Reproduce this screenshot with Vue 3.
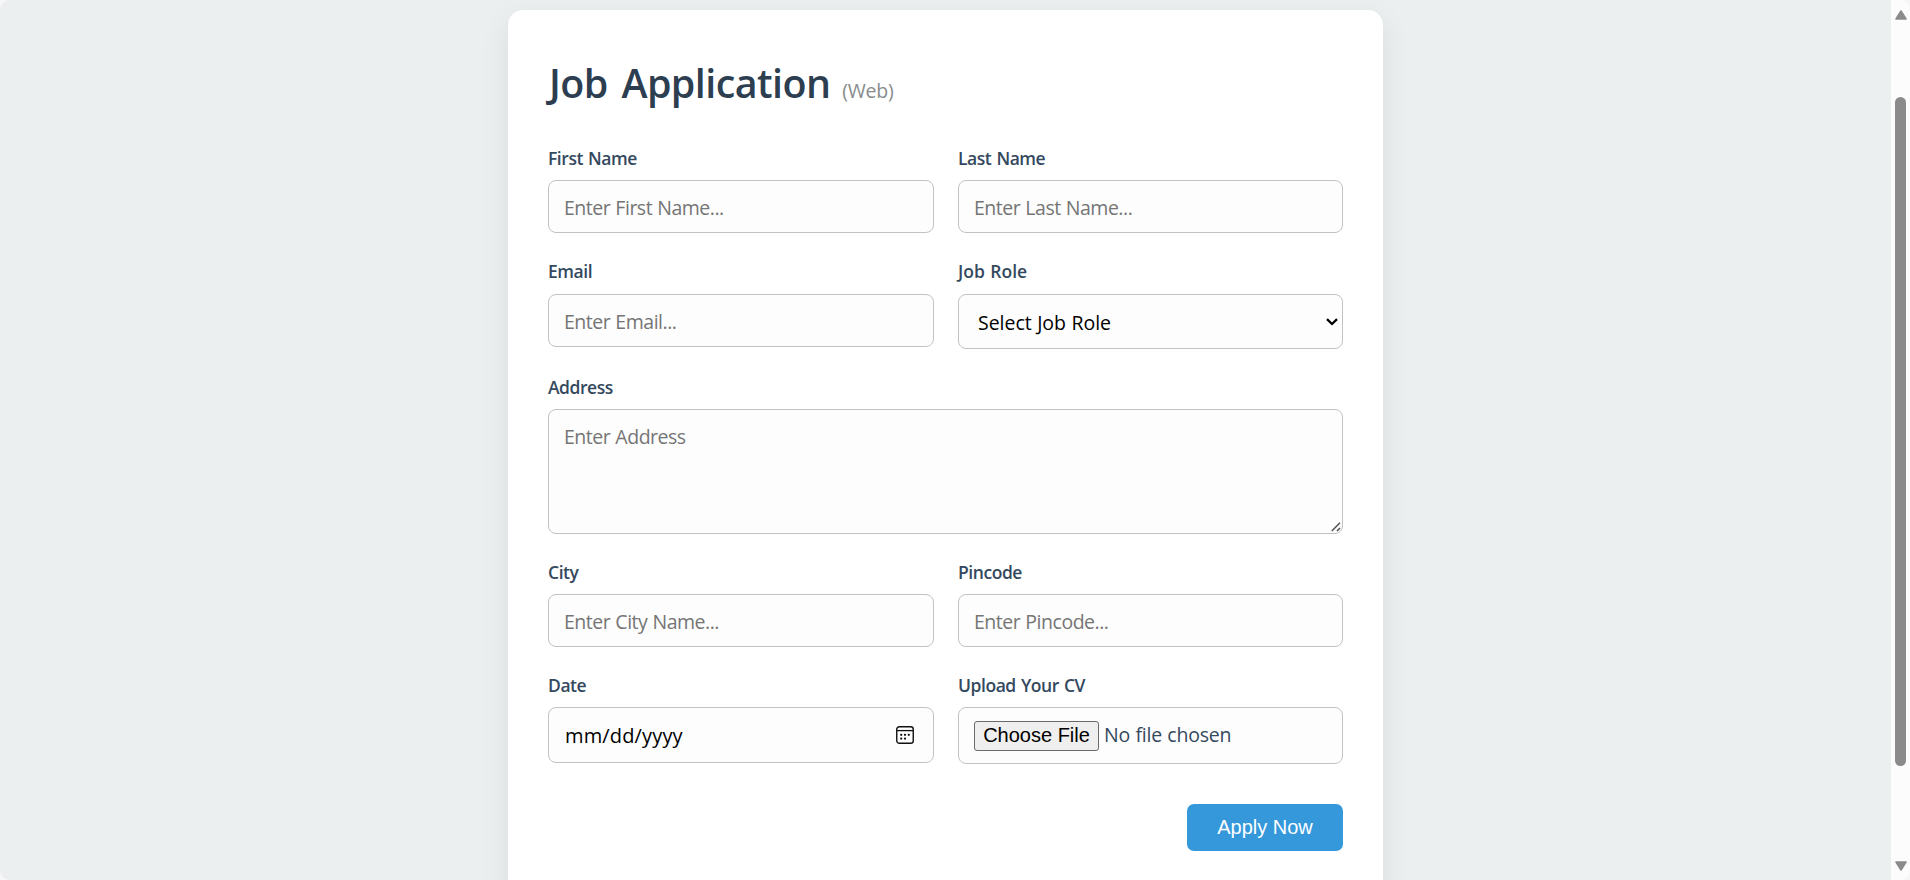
<script setup>
</script>

<template>
  <div class="page">
    <main class="scroll-area">
      <form class="card" @submit.prevent>
        <h1 class="title">Job Application <span class="sub">(Web)</span></h1>

        <div class="row">
          <label class="field"><span class="label">First Name</span>
            <input class="control" type="text" placeholder="Enter First Name..." /></label>
          <label class="field"><span class="label">Last Name</span>
            <input class="control" type="text" placeholder="Enter Last Name..." /></label>
        </div>

        <div class="row contact">
          <label class="field"><span class="label">Email</span>
            <input class="control" type="email" placeholder="Enter Email..." /></label>
          <div class="field"><span class="label role">Job Role</span>
            <div class="control select">
              <span>Select Job Role</span>
              <svg width="14" height="10" viewBox="0 0 14 10"><path d="M2 2.2 7 7 12 2.2" fill="none" stroke="#000" stroke-width="2.3" /></svg>
            </div>
          </div>
        </div>

        <label class="field wide"><span class="label">Address</span>
          <span class="area-wrap">
            <textarea class="control area" placeholder="Enter Address"></textarea>
            <svg class="grip" width="10" height="10" viewBox="0 0 10 10"><path d="M.8 9 9 .8M6 9 9 6" fill="none" stroke="#555" stroke-width="1.6" /></svg>
          </span>
        </label>

        <div class="row">
          <label class="field"><span class="label">City</span>
            <input class="control" type="text" placeholder="Enter City Name..." /></label>
          <label class="field"><span class="label">Pincode</span>
            <input class="control" type="text" placeholder="Enter Pincode..." /></label>
        </div>

        <div class="row">
          <div class="field"><span class="label">Date</span>
            <div class="control date">
              <span>mm/dd/yyyy</span>
              <svg width="18" height="18" viewBox="0 0 18 18">
                <rect x=".75" y=".75" width="16.5" height="16.5" rx="2.6" fill="none" stroke="#111" stroke-width="1.4" />
                <path d="M1 4.6H17" stroke="#111" stroke-width="1.3" />
                <g fill="#111"><circle cx="5.2" cy="8.8" r="1.15" /><circle cx="9" cy="8.8" r="1.15" /><circle cx="12.8" cy="8.8" r="1.15" /><circle cx="5.2" cy="12.6" r="1.15" /><circle cx="9" cy="12.6" r="1.15" /></g>
              </svg>
            </div>
          </div>
          <div class="field"><span class="label">Upload Your CV</span>
            <div class="control file">
              <button class="choose" type="button">Choose File</button>
              <span>No file chosen</span>
            </div>
          </div>
        </div>

        <button class="apply" type="submit">Apply Now</button>
      </form>
    </main>
    <aside class="scrollbar">
      <svg width="12" height="10" viewBox="0 0 12 10"><path d="M6 1 11 9H1Z" fill="#8b8b8b" stroke="#8b8b8b" stroke-width="1.6" stroke-linejoin="round" /></svg>
      <div class="thumb"></div>
      <svg width="12" height="10" viewBox="0 0 12 10"><path d="M6 9 11 1H1Z" fill="#8b8b8b" stroke="#8b8b8b" stroke-width="1.6" stroke-linejoin="round" /></svg>
    </aside>
  </div>
</template>

<style>
body { background: #f7f7f7; overflow: hidden; }
</style>

<style scoped>
* { box-sizing: border-box; }
.page {
  display: flex;
  height: 880px;
  overflow: hidden;
  border-radius: 10px;
  background: #ebeff0;
  font-family: "Open Sans", "Noto Sans", sans-serif;
}
.scroll-area { flex: 1; padding: 10px 0 0 508px; overflow: hidden; }
.card {
  display: flex;
  flex-direction: column;
  width: 875px;
  height: 900px;
  padding: 40px;
  border-radius: 15px;
  background: #fff;
  box-shadow: 0 10px 31px rgba(0, 0, 0, 0.08);
}
.title {
  margin: 0 0 29px;
  height: 67px;
  padding-left: 1px;
  line-height: 67px;
  font-size: 39.4px;
  font-weight: 600;
  letter-spacing: -0.55px;
  word-spacing: 4px;
  color: #2c3e50;
  white-space: nowrap;
}
.sub {
  margin-left: -2px;
  font-size: 19.5px;
  font-weight: 400;
  letter-spacing: -0.2px;
  color: #888c8d;
}
.row {
  display: grid;
  grid-template-columns: 386px 385px;
  column-gap: 24px;
  align-items: start;
  margin-bottom: 26px;
}
.row.contact .field { gap: 11px; }
.wide { margin-bottom: 26px; }
.field { display: flex; flex-direction: column; gap: 10px; }
.label {
  height: 24px;
  line-height: 24px;
  font-size: 17.5px;
  font-weight: 600;
  letter-spacing: -0.45px;
  word-spacing: 1px;
  color: #34495e;
}
.label.role { letter-spacing: 0; }
.control {
  display: block;
  width: 100%;
  height: 53px;
  margin: 0;
  padding: 2px 15px 0;
  border: 1px solid #bdc3c7;
  border-radius: 8px;
  background: #fdfdfd;
  font-family: inherit;
  font-size: 19.5px;
  letter-spacing: -0.48px;
  word-spacing: 0.5px;
  color: #000;
  outline: none;
}
.control::placeholder { color: #757575; opacity: 1; }
.select, .date, .file { display: flex; align-items: center; }
.select {
  height: 55px;
  justify-content: space-between;
  padding: 2px 3px 0 19px;
  letter-spacing: -0.03px;
}
.select svg { margin-top: -2px; }
.area-wrap { position: relative; display: block; height: 125px; }
.area { height: 125px; padding: 13px 15px; line-height: 27px; resize: none; }
.grip { position: absolute; right: 2px; bottom: 2px; }
.date {
  height: 56px;
  justify-content: space-between;
  padding: 0 19px 0 16px;
  font-size: 20px;
  letter-spacing: 0.15px;
}
.file { height: 57px; padding: 0 15px; color: #34495e; letter-spacing: -0.2px; }
.file span { margin: -3px 0 0 5px; }
.choose {
  width: 125px;
  height: 30px;
  margin: 0;
  padding: 0;
  border: 1px solid #6b6b6b;
  border-radius: 3px;
  background: #efefef;
  font: 20px "Liberation Sans", sans-serif;
  color: #000;
}
.apply {
  align-self: flex-end;
  width: 156px;
  height: 47px;
  margin-top: 14px;
  padding: 0;
  border: 0;
  border-radius: 7px;
  background: #3498db;
  font: 20px "Liberation Sans", sans-serif;
  color: #fff;
}
.scrollbar {
  display: flex;
  flex-direction: column;
  align-items: center;
  width: 19px;
  padding: 10px 0 9px;
  background: #fcfcfc;
}
.thumb { width: 11px; height: 669px; margin: 77px 0 95px; border-radius: 6px; background: #8b8b8b; }
</style>
